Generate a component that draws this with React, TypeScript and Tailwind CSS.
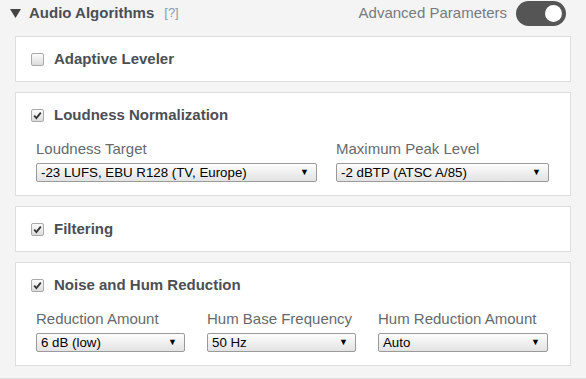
import React from 'react';

type Field = { label: string; value: string; width: string };

const Checkbox: React.FC<{ checked?: boolean }> = ({ checked }) => (
  <span className="flex h-[13px] w-[13px] shrink-0 items-center justify-center rounded-[2px] border border-[#a9a9a9] bg-gradient-to-b from-[#fcfcfc] to-[#dcdcdc]">
    {checked && (
      <svg width="9" height="9" viewBox="0 0 9 9">
        <path d="M1.2 4.6 L3.4 7 L7.8 1.6" fill="none" stroke="#333" strokeWidth="1.8" />
      </svg>
    )}
  </span>
);

const Select: React.FC<{ value: string; width: string }> = ({ value, width }) => (
  <div
    className={`flex h-[19px] items-center justify-between rounded-[2px] border border-[#9a9a9a] bg-gradient-to-b from-[#fdfdfd] to-[#e3e3e3] pl-[4px] pr-[7px] text-[13.3px] text-black ${width}`}
  >
    <span className="leading-none">{value}</span>
    <span className="text-[9px] leading-none">▼</span>
  </div>
);

const Panel: React.FC<{ title: string; checked?: boolean; fields?: Field[] }> = ({ title, checked, fields }) => (
  <div className="border border-[#dddddd] bg-white pt-[14px] pb-[13px]">
    <div className="flex h-[17px] items-center gap-[10px] pl-[15px]">
      <Checkbox checked={checked} />
      <span className="text-[15px] font-bold text-[#4b4f54]">{title}</span>
    </div>
    {fields && (
      <div className="mt-[16px] flex pl-[20px]">
        {fields.map((f) => (
          <div key={f.label} className="flex flex-col">
            <span className="h-[17px] text-[15px] leading-[17px] text-[#666a6e]">{f.label}</span>
            <div className="mt-[6px]">
              <Select value={f.value} width={f.width} />
            </div>
          </div>
        ))}
      </div>
    )}
  </div>
);

const App: React.FC = () => {
  return (
    <div className="h-[379px] w-[586px] overflow-hidden bg-[#f4f4f4] font-['Liberation_Sans',Arial,sans-serif]">
      <div className="h-[379px] border-b border-[#dddddd]">
        <div className="flex h-[26px] items-center pl-[10px] pr-[20px]">
          <svg width="11" height="9" viewBox="0 0 11 9" className="shrink-0">
            <polygon points="0,0 11,0 5.5,9" fill="#444" />
          </svg>
          <span className="ml-[8px] text-[15px] font-bold text-[#4b4f54]">Audio Algorithms</span>
          <span className="ml-[10px] text-[13px] text-[#8b9bb0]">[?]</span>
          <span className="ml-auto text-[15px] text-[#777b80]">Advanced Parameters</span>
          <div className="ml-[9px] flex h-[25px] w-[50px] items-center justify-end rounded-full bg-[#555555] pr-[4px]">
            <div className="h-[17px] w-[17px] rounded-full bg-white" />
          </div>
        </div>
        <div className="mt-[10px] flex flex-col gap-[10px] px-[15px]">
          <Panel title="Adaptive Leveler" />
          <Panel
            title="Loudness Normalization"
            checked
            fields={[
              { label: 'Loudness Target', value: '-23 LUFS, EBU R128 (TV, Europe)', width: 'w-[281px] mr-[19px]' },
              { label: 'Maximum Peak Level', value: '-2 dBTP (ATSC A/85)', width: 'w-[213px]' },
            ]}
          />
          <Panel title="Filtering" checked />
          <Panel
            title="Noise and Hum Reduction"
            checked
            fields={[
              { label: 'Reduction Amount', value: '6 dB (low)', width: 'w-[149px] mr-[22px]' },
              { label: 'Hum Base Frequency', value: '50 Hz', width: 'w-[149px] mr-[22px]' },
              { label: 'Hum Reduction Amount', value: 'Auto', width: 'w-[170px]' },
            ]}
          />
        </div>
      </div>
    </div>
  );
};

export default App;
